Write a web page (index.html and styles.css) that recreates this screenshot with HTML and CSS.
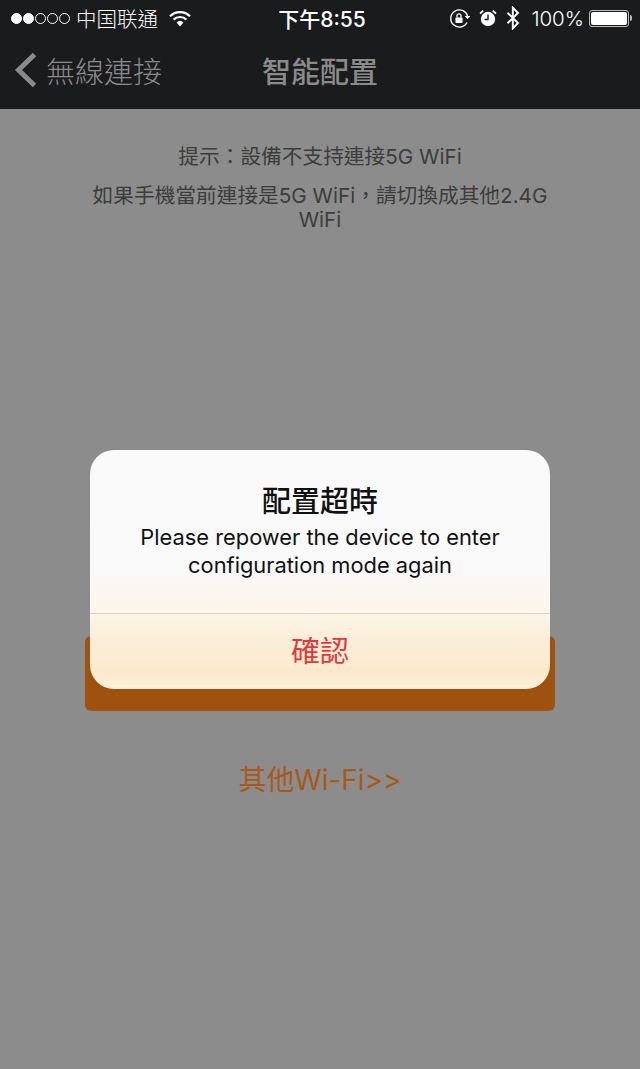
FILE: index.html
```html
<!DOCTYPE html>
<html lang="zh-Hant">
<head>
  <meta charset="UTF-8">
  <meta name="viewport" content="width=device-width, initial-scale=1.0">
  <title>智能配置</title>
  <link rel="stylesheet" href="styles.css">
</head>
<body>
  <header class="top">
    <div class="status">
      <div class="status-left">
        <span class="signal">
          <i class="dot on"></i><i class="dot on"></i><i class="dot"></i><i class="dot"></i><i class="dot"></i>
        </span>
        <span class="carrier">中国联通</span>
        <svg class="wifi" width="22" height="17" viewBox="0 0 22 17">
          <path d="M1 6.2a14.2 14.2 0 0 1 20 0" fill="none" stroke="#fff" stroke-width="2.2"/>
          <path d="M4.6 9.6a9.2 9.2 0 0 1 12.8 0" fill="none" stroke="#fff" stroke-width="2.2"/>
          <path d="M7.6 12.4 11 16.4l3.4-4a5 5 0 0 0-6.8 0z" fill="#fff"/>
        </svg>
      </div>
      <div class="clock">下午8:55</div>
      <div class="status-right">
        <svg width="21" height="21" viewBox="0 0 21 21">
          <path d="M18 14.5A8.6 8.6 0 1 1 18.6 8" fill="none" stroke="#fff" stroke-width="1.4"/>
          <path d="M15.8 8h5.4l-2.7 3.2z" fill="#fff"/>
          <rect x="6.4" y="9.4" width="7.2" height="5.6" rx="1" fill="#fff"/>
          <path d="M8 9.6V7.8a2 2 0 0 1 4 0v1.8" fill="none" stroke="#fff" stroke-width="1.3"/>
        </svg>
        <svg class="alarm" width="18" height="18" viewBox="0 0 18 18">
          <circle cx="9" cy="10" r="7.2" fill="#fff"/>
          <path d="M9 5.5V10.5H5.5" fill="none" stroke="#1a1b1d" stroke-width="1.4"/>
          <path d="M1 4.6 4.2 1.6M17 4.6 13.8 1.6" stroke="#fff" stroke-width="1.8"/>
        </svg>
        <svg class="bt" width="14" height="24" viewBox="0 0 14 24">
          <path d="M1.5 6.8 12 17l-5.2 5.4V1.6L12 7 1.5 17.2" fill="none" stroke="#fff" stroke-width="1.9"/>
        </svg>
        <span class="percent">100%</span>
        <span class="battery"><i class="battery-fill"></i></span>
        <i class="battery-tip"></i>
      </div>
    </div>
    <nav class="nav">
      <div class="back">
        <svg width="24" height="36" viewBox="0 0 24 36">
          <path d="M20.5 2.5 4.5 18l16 15.5" fill="none" stroke="#8a8a8a" stroke-width="5"/>
        </svg>
        <span>無線連接</span>
      </div>
      <h1 class="nav-title">智能配置</h1>
    </nav>
  </header>

  <main class="content">
    <p class="hint">提示：設備不支持連接5G WiFi</p>
    <p class="hint hint-long">如果手機當前連接是5G WiFi，請切換成其他2.4G WiFi</p>
    <div class="action"></div>
    <a class="other" href="#">其他Wi-Fi&gt;&gt;</a>
  </main>

  <div class="alert">
    <div class="alert-body">
      <h2>配置超時</h2>
      <p>Please repower the device to enter configuration mode again</p>
    </div>
    <div class="alert-btn">確認</div>
  </div>
</body>
</html>
```

FILE: styles.css
```css
html, body {
  margin: 0;
  height: 1069px;
  overflow: hidden;
}

body {
  position: relative;
  background-color: #8c8c8c;
  font-family: Inter, Roboto, "Noto Sans CJK TC", sans-serif;
}

.top {
  height: 109px;
  background-color: #1a1b1d;
  color: #fff;
}

.status {
  height: 36px;
  padding: 0 8px 0 11px;
  display: flex;
  align-items: center;
  justify-content: space-between;
  font-size: 20px;
}

.status-left, .status-right {
  width: 220px;
  display: flex;
  align-items: center;
}

.status-right {
  justify-content: flex-end;
}

.signal {
  display: flex;
  gap: 1px;
  margin-right: 6px;
}

.dot {
  width: 11px;
  height: 11px;
  box-sizing: border-box;
  border: 1px solid #fff;
  border-radius: 50%;
}

.dot.on {
  background-color: #fff;
}

.carrier {
  font-size: 20.5px;
  font-weight: 300;
}

.wifi {
  margin-left: 11px;
}

.clock {
  font-size: 21px;
  font-weight: 500;
  margin-left: 1px;
}

.alarm {
  margin-left: 9px;
}

.bt {
  margin-left: 9px;
}

.percent {
  margin-left: 11px;
  font-size: 20.5px;
  font-weight: 300;
}

.battery {
  margin-left: 5px;
  width: 40px;
  height: 17px;
  box-sizing: border-box;
  border: 1px solid #bbb;
  border-radius: 3px;
  padding: 1px;
  display: flex;
}

.battery-fill {
  flex: 1;
  background-color: #fff;
  border-radius: 2px;
}

.battery-tip {
  width: 2px;
  height: 6px;
  margin-left: 1px;
  background-color: #bbb;
  border-radius: 0 2px 2px 0;
}

.nav {
  position: relative;
  height: 67px;
  display: flex;
  align-items: center;
  justify-content: center;
  color: #8a8a8a;
}

.back {
  position: absolute;
  left: 14px;
  top: 13px;
  display: flex;
  align-items: center;
  gap: 8px;
  font-size: 29px;
  font-weight: 300;
}

.nav-title {
  margin: 0;
  font-size: 29px;
  font-weight: 500;
}

.content {
  padding-top: 36px;
  display: flex;
  flex-direction: column;
  align-items: center;
  color: #3c3c3c;
}

.hint {
  margin: 0 0 15px;
  width: 470px;
  font-size: 20.7px;
  line-height: 24px;
  text-align: center;
}

.hint-long {
  width: 460px;
}

.action {
  margin-top: 389px;
  width: 470px;
  height: 75px;
  background-color: #9f5210;
  border-radius: 6px;
}

.other {
  margin-top: 50px;
  color: #a8591a;
  font-size: 27.9px;
  line-height: 38px;
  text-decoration: none;
}

.alert {
  position: absolute;
  left: 90px;
  top: 450px;
  width: 460px;
  height: 239px;
  border-radius: 24px;
  overflow: hidden;
  background: linear-gradient(#fafafa 0%, #f9f9f9 50%, #fcf5e9 68%, #fbeed8 80%, #fbe9cd 93%, #fdf0dc 100%);
}

.alert-body {
  height: 164px;
  box-sizing: border-box;
  padding-top: 33px;
  border-bottom: 1px solid #e0cfc0;
  text-align: center;
  color: #111;
}

.alert-body h2 {
  margin: 0 0 3px;
  font-size: 29px;
  line-height: 37px;
  font-weight: 500;
}

.alert-body p {
  margin: 0 auto;
  width: 400px;
  font-size: 21.85px;
  line-height: 28px;
}

.alert-btn {
  height: 75px;
  line-height: 75px;
  text-align: center;
  color: #e2383a;
  font-size: 29px;
}
```
